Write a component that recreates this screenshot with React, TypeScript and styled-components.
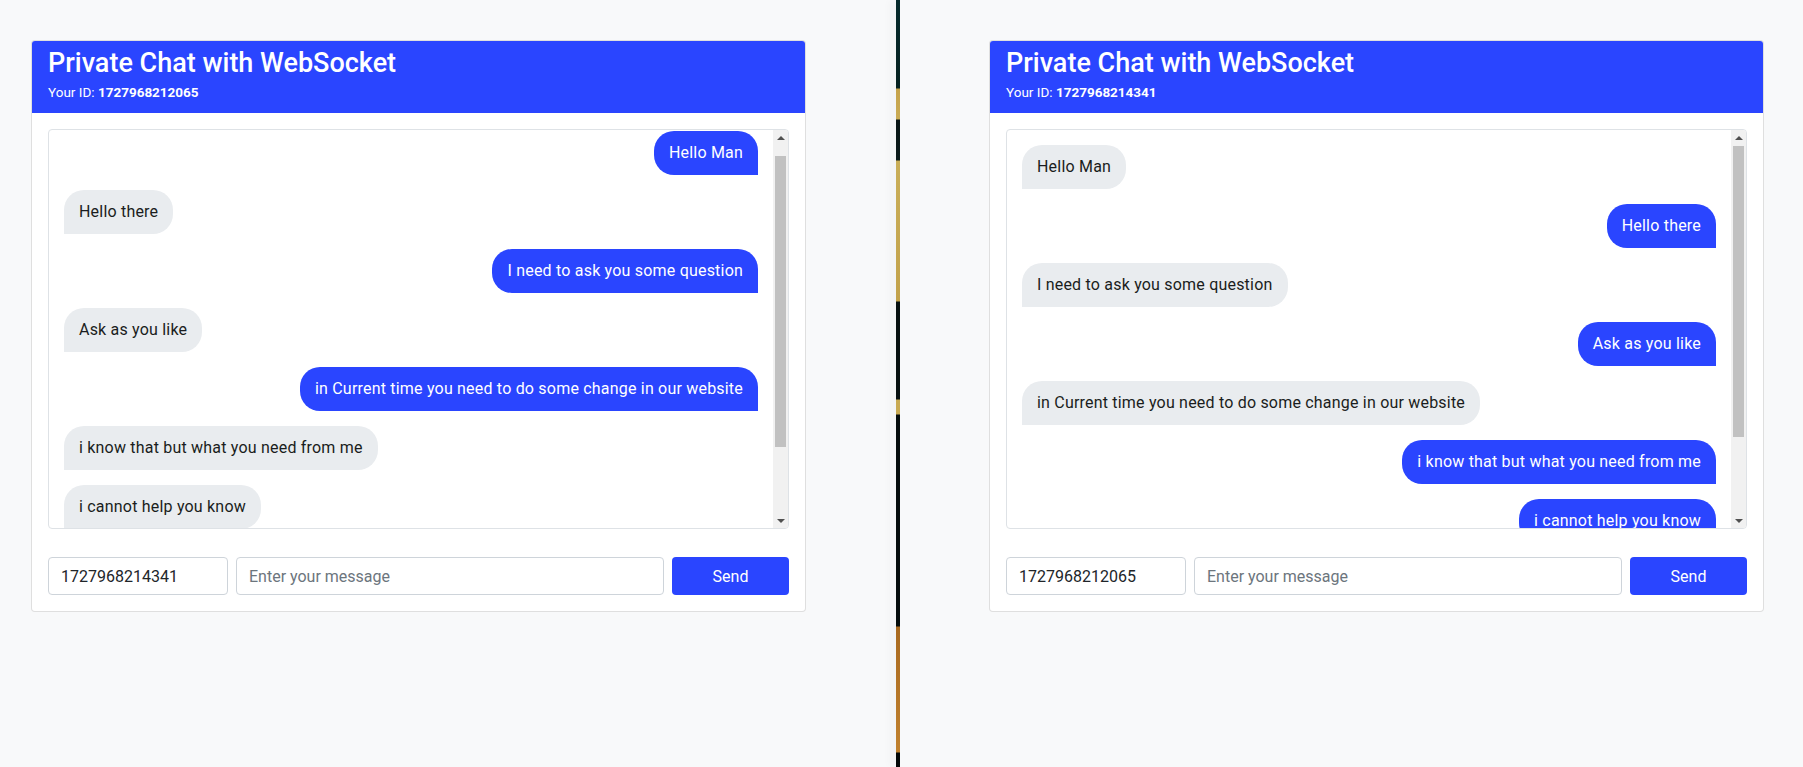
import React, { useLayoutEffect, useRef, useState } from "react";
import styled, { createGlobalStyle } from "styled-components";

// two browser windows side by side, each one a chat client
const GlobalStyle = createGlobalStyle`
  html, body {
    margin: 0;
    padding: 0;
    background: #f8f9fa;
    font-family: Roboto, "Liberation Sans", Arial, sans-serif;
    color: #212529;
  }
  * { box-sizing: border-box; }
`;

const BLUE = "#2a45ff";
const ARROW = "#505050";
const BTN = 16; // scrollbar arrow button height

type Msg = { text: string; mine: boolean };

const Screen = styled.div`
  display: flex;
  width: 100%;
  height: 100vh;
  overflow: hidden;
`;

const Window = styled.div<{ $left: number; $width?: number }>`
  ${(p) => (p.$width ? `width: ${p.$width}px; flex-shrink: 0;` : "flex: 1;")}
  padding: 40px 0 0 ${(p) => p.$left}px;
  background: #f8f9fa;
`;

// strip of desktop wallpaper between the windows
const Divider = styled.div`
  width: 4px;
  flex-shrink: 0;
  box-shadow: -5px 0 8px rgba(0, 0, 0, 0.05);
  background: linear-gradient(
    to bottom,
    #062b2d 0px,
    #04201f 88px,
    #c5a24a 89px,
    #c9ab55 119px,
    #071414 120px,
    #0a1a1a 160px,
    #c9ae58 161px,
    #c2a24b 301px,
    #061010 302px,
    #061010 399px,
    #c8aa52 400px,
    #c8aa52 414px,
    #040c0c 415px,
    #040c0c 626px,
    #a8691f 627px,
    #c0812e 752px,
    #030909 753px
  );
`;

const Card = styled.div`
  width: 775px;
  background: #fff;
  border: 1px solid rgba(0, 0, 0, 0.125);
  border-radius: 4px;
`;

const CardHeader = styled.div`
  background: ${BLUE};
  color: #fff;
  padding: 8px 16px;
  border-radius: 3px 3px 0 0;
`;

const Title = styled.h3`
  margin: 0;
  font-size: 27px;
  font-weight: 500;
  line-height: 28px;
`;

const SubTitle = styled.div`
  margin-top: 3px;
  font-size: 13.5px;
  line-height: 25px;
  b { font-weight: 700; }
`;

const CardBody = styled.div`
  padding: 16px;
`;

const ChatBox = styled.div`
  display: flex;
  height: 400px;
  border: 1px solid #dee2e6;
  border-radius: 4px;
  overflow: hidden;
  margin-bottom: 28px;
`;

const MessageList = styled.div`
  flex: 1;
  min-width: 0;
  overflow: hidden;
  padding: 15px 15px 72px;
`;

// classic scrollbar: arrow, track with thumb, arrow
const ScrollBar = styled.div`
  width: 15px;
  flex-shrink: 0;
  display: flex;
  flex-direction: column;
  background: #f1f1f1;
`;

const ArrowButton = styled.div`
  height: ${BTN}px;
  flex-shrink: 0;
  display: flex;
  align-items: center;
  justify-content: center;
`;

const Arrow = styled.span<{ $down?: boolean }>`
  width: 0;
  height: 0;
  border-left: 4px solid transparent;
  border-right: 4px solid transparent;
  ${(p) =>
    p.$down
      ? `border-top: 4px solid ${ARROW}; margin-top: 1px;`
      : `border-bottom: 4px solid ${ARROW}; margin-bottom: 1px;`}
`;

const Track = styled.div`
  flex: 1;
  padding: 0 2px;
`;

const Thumb = styled.div`
  background: #c1c1c1;
`;

const Row = styled.div<{ $mine: boolean }>`
  display: flex;
  justify-content: ${(p) => (p.$mine ? "flex-end" : "flex-start")};
  margin-bottom: 15px;
`;

const Bubble = styled.div<{ $mine: boolean }>`
  max-width: 75%;
  padding: 10px 15px;
  font-size: 16px;
  line-height: 24px;
  letter-spacing: 0.2px;
  background: ${(p) => (p.$mine ? BLUE : "#e9ecef")};
  color: ${(p) => (p.$mine ? "#fff" : "#1a1d20")};
  border-radius: ${(p) => (p.$mine ? "20px 20px 0 20px" : "20px 20px 20px 0")};
`;

const InputRow = styled.div`
  display: flex;
  gap: 8px;
`;

const Field = styled.input<{ $width?: number }>`
  ${(p) => (p.$width ? `width: ${p.$width}px; flex-shrink: 0;` : "flex: 1; min-width: 0;")}
  height: 38px;
  padding: 6px 12px;
  font-family: inherit;
  font-size: 16px;
  color: #212529;
  border: 1px solid #ced4da;
  border-radius: 4px;
  background: #fff;
  outline: none;
  &::placeholder { color: #6c757d; }
`;

const SendButton = styled.button`
  width: 117px;
  height: 38px;
  flex-shrink: 0;
  border: none;
  border-radius: 4px;
  background: ${BLUE};
  color: #fff;
  font-family: inherit;
  font-size: 16px;
  cursor: pointer;
`;

const conversation = [
  { text: "Hello Man", byA: true },
  { text: "Hello there", byA: false },
  { text: "I need to ask you some question", byA: true },
  { text: "Ask as you like", byA: false },
  { text: "in Current time you need to do some change in our website", byA: true },
  { text: "i know that but what you need from me", byA: false },
  { text: "i cannot help you know", byA: false },
];

interface ChatProps {
  myId: string;
  recipient: string;
  messages: Msg[];
  scrollOffset?: number;
}

const ChatCard = ({ myId, recipient, messages, scrollOffset = 0 }: ChatProps) => {
  const listRef = useRef<HTMLDivElement>(null);
  const [thumb, setThumb] = useState({ top: 0, size: 0 });

  useLayoutEffect(() => {
    const el = listRef.current;
    if (!el) return;
    el.scrollTop = scrollOffset;
    const track = el.clientHeight - BTN * 2;
    const size = Math.round((track * el.clientHeight) / el.scrollHeight);
    const max = el.scrollHeight - el.clientHeight;
    const top = max > 0 ? Math.round((el.scrollTop / max) * (track - size)) : 0;
    setThumb({ top, size });
  }, [scrollOffset, messages]);

  return (
    <Card>
      <CardHeader>
        <Title>Private Chat with WebSocket</Title>
        <SubTitle>
          Your ID: <b>{myId}</b>
        </SubTitle>
      </CardHeader>
      <CardBody>
        <ChatBox>
          <MessageList ref={listRef}>
            {messages.map((m, i) => (
              <Row key={i} $mine={m.mine}>
                <Bubble $mine={m.mine}>{m.text}</Bubble>
              </Row>
            ))}
          </MessageList>
          <ScrollBar>
            <ArrowButton>
              <Arrow />
            </ArrowButton>
            <Track>
              <Thumb style={{ marginTop: thumb.top, height: thumb.size }} />
            </Track>
            <ArrowButton>
              <Arrow $down />
            </ArrowButton>
          </ScrollBar>
        </ChatBox>
        <InputRow>
          <Field $width={180} defaultValue={recipient} />
          <Field placeholder="Enter your message" />
          <SendButton>Send</SendButton>
        </InputRow>
      </CardBody>
    </Card>
  );
};

export default function App() {
  const idA = "1727968212065";
  const idB = "1727968214341";

  return (
    <>
      <GlobalStyle />
      <Screen>
        <Window $left={31} $width={896}>
          <ChatCard
            myId={idA}
            recipient={idB}
            scrollOffset={14}
            messages={conversation.map((c) => ({ text: c.text, mine: c.byA }))}
          />
        </Window>
        <Divider />
        <Window $left={89}>
          <ChatCard
            myId={idB}
            recipient={idA}
            messages={conversation.map((c) => ({ text: c.text, mine: !c.byA }))}
          />
        </Window>
      </Screen>
    </>
  );
}
